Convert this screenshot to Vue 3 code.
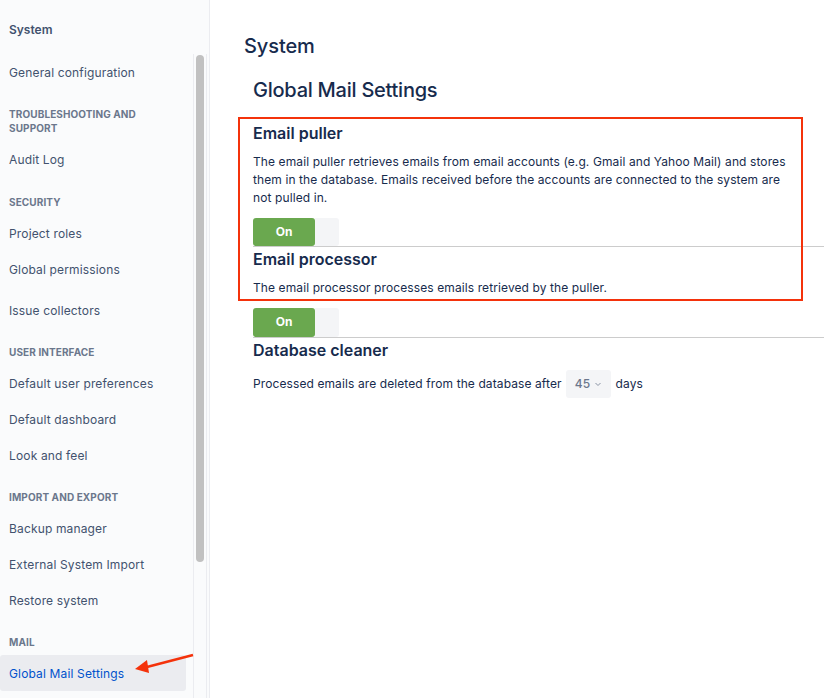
<template>
  <div class="page">
    <aside class="sidebar">
      <div class="side-title">System</div>
      <div class="side-scroll">
        <nav class="nav">
          <div v-for="group in groups" :key="group.title" class="group">
            <div v-if="group.title" class="group-title">{{ group.title }}</div>
            <a
              v-for="item in group.items"
              :key="item"
              class="item"
              :class="{ active: item === 'Global Mail Settings', spaced: item === 'Issue collectors' }"
            >{{ item }}</a>
          </div>
        </nav>
        <div class="track"><div class="thumb"></div></div>
      </div>
    </aside>

    <main class="main">
      <h1>System</h1>
      <div class="content">
        <h2>Global Mail Settings</h2>

        <section class="setting first">
          <h3>Email puller</h3>
          <p>
            The email puller retrieves emails from email accounts (e.g. Gmail and Yahoo Mail) and stores
            them in the database. Emails received before the accounts are connected to the system are
            not pulled in.
          </p>
          <div class="toggle"><span class="on">On</span><span class="off"></span></div>
        </section>

        <section class="setting second">
          <h3>Email processor</h3>
          <p>The email processor processes emails retrieved by the puller.</p>
          <div class="toggle tall"><span class="on">On</span><span class="off"></span></div>
        </section>

        <section class="setting last">
          <h3>Database cleaner</h3>
          <p class="days">
            Processed emails are deleted from the database after
            <span class="select">45 <svg width="8" height="8" viewBox="0 0 8 8"><path d="M1.5 3l2.5 2.5L6.5 3" fill="none" stroke="#8993a4" stroke-width="1"/></svg></span>
            days
          </p>
        </section>
      </div>
    </main>

    <div class="red-box"></div>
    <svg class="arrow" width="70" height="30" viewBox="0 0 70 30">
      <path d="M63 2L15 14.5" stroke="#f4320b" stroke-width="2.5" fill="none"/>
      <path d="M5 16L17 7L19 20Z" fill="#f4320b"/>
    </svg>
  </div>
</template>

<script setup>
const groups = [
  { title: "", items: ["General configuration"] },
  { title: "TROUBLESHOOTING AND SUPPORT", items: ["Audit Log"] },
  { title: "SECURITY", items: ["Project roles", "Global permissions", "Issue collectors"] },
  { title: "USER INTERFACE", items: ["Default user preferences", "Default dashboard", "Look and feel"] },
  { title: "IMPORT AND EXPORT", items: ["Backup manager", "External System Import", "Restore system"] },
  { title: "MAIL", items: ["Global Mail Settings"] },
];
</script>

<style scoped>
.page {
  position: relative;
  display: flex;
  width: 824px;
  height: 698px;
  overflow: hidden;
  background: #fff;
  color: #172b4d;
  font-family: Inter, "Liberation Sans", sans-serif;
  font-size: 13px;
}

.sidebar {
  width: 209px;
  flex: none;
  background: #fafbfc;
  border-right: 1px solid #ebecf0;
  box-sizing: content-box;
}

.side-title {
  height: 54px;
  padding-left: 9px;
  line-height: 59px;
  font-size: 12px;
  font-weight: 600;
  color: #42526e;
}

.side-scroll {
  display: flex;
  height: 644px;
}

.nav {
  width: 193px;
  flex: none;
}

.group {
  padding-bottom: 17px;
}

.group:nth-child(2) {
  padding-bottom: 18px;
}

.group-title {
  padding: 0 9px;
  margin-bottom: 6px;
  width: 150px;
  font-size: 10px;
  line-height: 14px;
  font-weight: 700;
  letter-spacing: 0.1px;
  color: #6b778c;
}

.item {
  display: block;
  width: 186px;
  height: 36px;
  padding: 1px 0 0 9px;
  box-sizing: border-box;
  line-height: 35px;
  font-size: 12px;
  letter-spacing: 0.15px;
  color: #42526e;
  border-radius: 3px;
}

.item.spaced {
  margin-top: 5px;
}

.item.active {
  background: #ebecf0;
  color: #0052cc;
}

.track {
  width: 14px;
  border-left: 1px solid #ebecf0;
  border-right: 1px solid #ebecf0;
  box-sizing: border-box;
  padding: 1px 2px;
}

.thumb {
  width: 8px;
  height: 507px;
  background: #c1c1c1;
  border-radius: 4px;
}

.main {
  flex: 1;
  padding: 34px 0 0 34px;
}

h1 {
  margin: 0;
  font-size: 20px;
  line-height: 24px;
  font-weight: 500;
  letter-spacing: -0.1px;
}

.content {
  padding-left: 9px;
}

h2 {
  margin: 20px 0 0;
  font-size: 20px;
  line-height: 24px;
  font-weight: 500;
  letter-spacing: -0.25px;
}

h3 {
  margin: 0;
  font-size: 16px;
  line-height: 24px;
  font-weight: 600;
}

p {
  margin: 8px 0 0;
  width: 536px;
  line-height: 18px;
  font-size: 12px;
  letter-spacing: 0.1px;
}

.setting.first {
  padding-top: 19px;
}

.setting.first,
.setting.second {
  border-bottom: 1px solid #ccc;
}

.toggle {
  display: flex;
  height: 28px;
  margin-top: 11px;
}

.toggle.tall {
  height: 29px;
}

.on {
  width: 62px;
  background: #6aa84f;
  color: #fff;
  font-weight: 700;
  font-size: 12px;
  line-height: 28px;
  text-align: center;
  border-radius: 3px;
}

.off {
  width: 24px;
  background: #f4f5f7;
  border-radius: 0 3px 3px 0;
}

.select {
  display: inline-flex;
  align-items: center;
  justify-content: center;
  gap: 4px;
  width: 45px;
  height: 28px;
  margin: 0 1px;
  background: #f4f5f7;
  border-radius: 3px;
  color: #6b778c;
  font-weight: 500;
}

.red-box {
  position: absolute;
  left: 238px;
  top: 117px;
  width: 565px;
  height: 184px;
  box-sizing: border-box;
  border: 2px solid #f4320b;
}

.arrow {
  position: absolute;
  left: 130px;
  top: 653px;
}
</style>
<style>
html, body {
  margin: 0;
}
</style>
